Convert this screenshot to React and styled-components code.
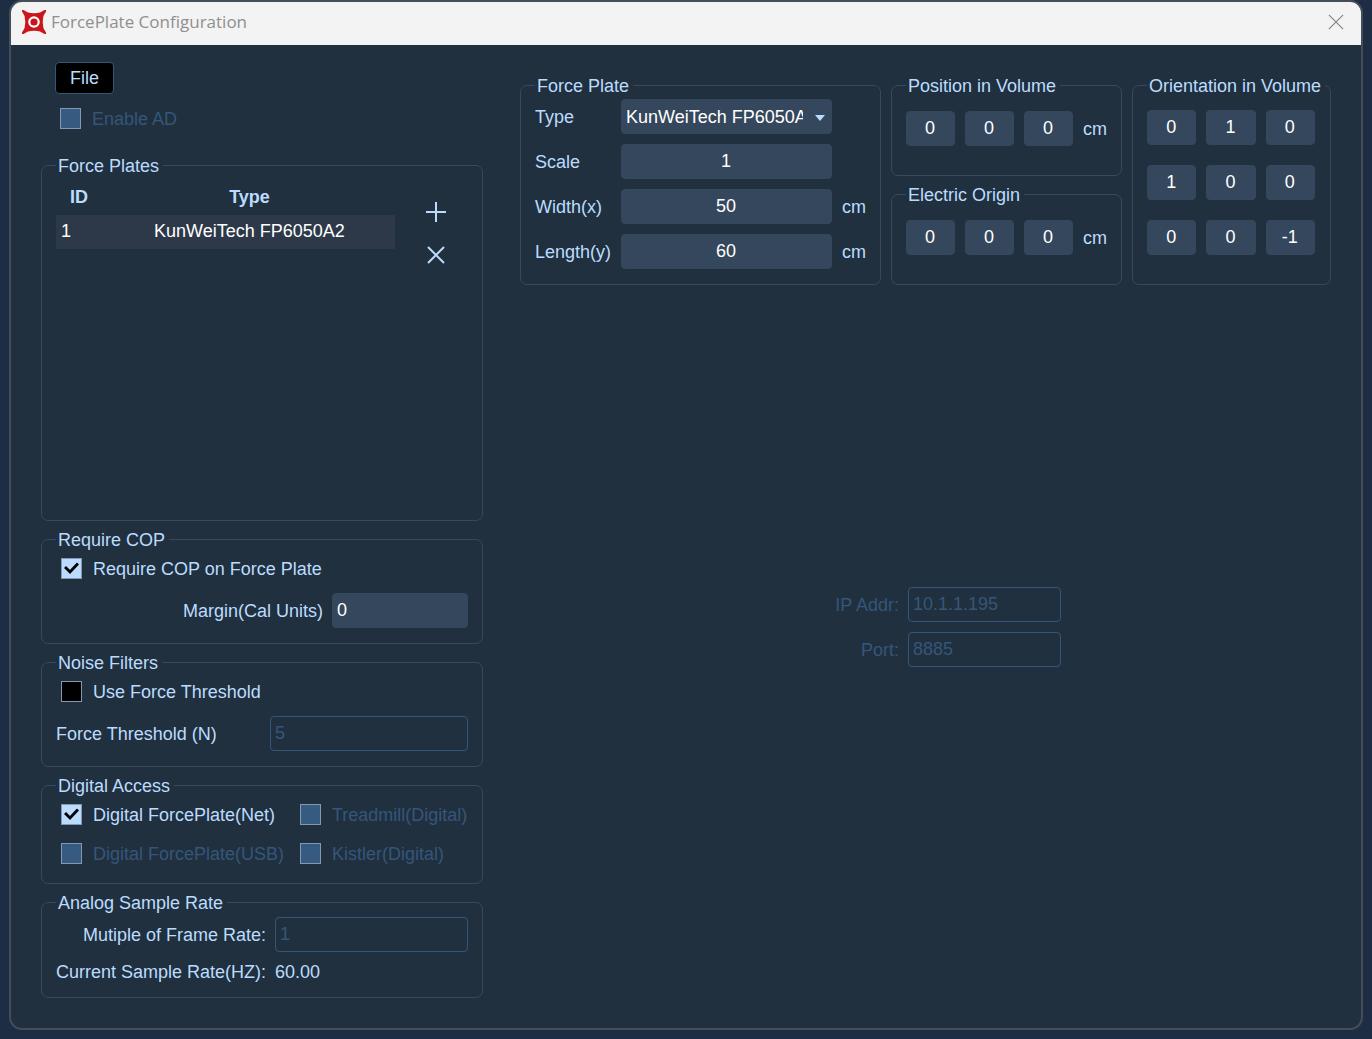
import { useState } from "react";
import styled, { createGlobalStyle } from "styled-components";

const GlobalStyle = createGlobalStyle`
  :root {
    --bg-window: #21303e;
    --bg-desktop: #1d2e44;
    --bg-input: #35475c;
    --bg-row: #2d3948;
    --line: #37495d;
    --text: #bbdcff;
    --muted: #34567b;
  }

  * {
    box-sizing: border-box;
  }

  body {
    margin: 0;
    background: var(--bg-desktop);
    color: var(--text);
    font: 18px/20px "Liberation Sans", Arial, sans-serif;
  }

  button,
  input,
  select {
    font: inherit;
  }
`;

const Page = styled.div`
  display: flex;
  min-height: 100vh;
  padding: 0 9px 9px;
`;

const Window = styled.main`
  flex: 1;
  display: flex;
  flex-direction: column;
  min-width: 0;
  border: 2px solid #444d58;
  border-radius: 13px;
  background: var(--bg-window);
  overflow: hidden;
`;

const TitleBar = styled.header`
  display: flex;
  align-items: center;
  height: 43px;
  padding: 0 13px 3px 11px;
  background: #f3f3f3;
`;

const Title = styled.h1`
  flex: 1;
  margin: 0 0 0 5px;
  color: #8f8f8f;
  font: 400 17px/24px "Open Sans", "Noto Sans", sans-serif;
`;

const IconButton = styled.button`
  display: grid;
  place-items: center;
  width: 24px;
  height: 24px;
  padding: 0;
  border: 0;
  background: none;
  color: ${({ $color }) => $color || "var(--text)"};
  cursor: pointer;
`;

const Content = styled.div`
  flex: 1;
  display: grid;
  grid-template-columns: 442px minmax(0, 1fr);
  column-gap: 37px;
  padding: 17px 30px 30px;
`;

const Sidebar = styled.div`
  display: flex;
  flex-direction: column;
  gap: 7px;
`;

const Toolbar = styled.div`
  display: flex;
  flex-direction: column;
  align-items: flex-start;
  gap: 14px;
  padding: 0 14px 18px;
`;

const FileButton = styled.button`
  width: 59px;
  height: 32px;
  padding: 0;
  border: 1px solid var(--muted);
  border-radius: 4px;
  background: #000;
  color: var(--text);
  cursor: pointer;
`;

const Group = styled.fieldset`
  flex: ${({ $grow }) => ($grow ? 1 : "none")};
  min-width: 0;
  margin: 0;
  padding: 0 0 0 14px;
  border: 1px solid var(--line);
  border-radius: 7px;
`;

const Legend = styled.legend`
  padding: 2px 4px 1px 2px;
  white-space: nowrap;
`;

const GroupBody = styled.div`
  display: flex;
  flex-direction: column;
  gap: 14px;
  padding: 7px 14px 15px 0;
`;

const PlatesBody = styled.div`
  display: flex;
  align-items: flex-start;
  gap: 29px;
`;

const PlatesTable = styled.table`
  width: 339px;
  border-collapse: collapse;
  table-layout: fixed;

  th {
    height: 38px;
    padding: 1px 0 0;
  }

  th:first-child {
    width: 46px;
  }

  td {
    height: 34px;
    padding: 0 0 2px;
    background: var(--bg-row);
    color: #fff;
    text-align: center;
  }

  th:last-child,
  td:last-child {
    padding-left: 2px;
  }

  td:first-child {
    padding-left: 5px;
    text-align: left;
  }
`;

const PlatesActions = styled.div`
  display: flex;
  flex-direction: column;
  gap: 19px;
  padding-top: 23px;
`;

const CheckLabel = styled.label`
  display: flex;
  align-items: center;
  gap: 11px;
  padding-left: 5px;
  color: ${({ $disabled }) => ($disabled ? "var(--muted)" : "var(--text)")};
  white-space: nowrap;
`;

const CheckSlot = styled.span`
  display: grid;
  width: 21px;
  height: 21px;

  > * {
    grid-area: 1 / 1;
    place-self: center;
  }

  svg {
    pointer-events: none;
  }
`;

const CheckInput = styled.input`
  appearance: none;
  width: 21px;
  height: 21px;
  margin: 0;
  border: 1px solid #8399b3;
  background: #000;

  &:checked {
    border-color: #8399b3;
    background: var(--text);
  }

  &:disabled {
    background: #375a80;
  }
`;

const CheckGrid = styled.div`
  display: grid;
  grid-template-columns: 239px 1fr;
  row-gap: 18px;
  padding: 7px 0 19px;
`;

const FieldRow = styled.div`
  display: flex;
  align-items: center;
  justify-content: ${({ $spread }) => ($spread ? "space-between" : "flex-end")};
  gap: 9px;
`;

const TextInput = styled.input`
  width: ${({ $width }) => $width || "100%"};
  min-width: 0;
  height: 35px;
  padding: ${({ $center }) => ($center ? "0 5px 0 4px" : "0 4px 1px")};
  border: 1px solid var(--bg-input);
  border-radius: 4px;
  outline: 0;
  background: var(--bg-input);
  color: #fff;
  text-align: ${({ $center }) => ($center ? "center" : "left")};

  &:disabled {
    border-color: var(--muted);
    background: transparent;
    color: var(--muted);
  }
`;

const RateGrid = styled.div`
  display: grid;
  grid-template-columns: 210px 1fr;
  align-items: center;
  gap: 10px 9px;
  padding: 3px 14px 15px 0;

  label,
  span {
    text-align: right;
    white-space: nowrap;
  }

  output {
    text-align: left;
  }
`;

const Main = styled.div`
  min-width: 0;
  padding-top: 12px;
`;

const Panels = styled.div`
  display: grid;
  grid-template-columns: 361fr 231fr 199fr;
  gap: 10px;
`;

const PanelStack = styled.div`
  display: flex;
  flex-direction: column;
  gap: 7px;
`;

const PlateGrid = styled.div`
  display: grid;
  grid-template-columns: 76px minmax(0, 1fr) 24px;
  align-items: center;
  gap: 10px;
  padding: 2px 14px 15px 0;

  label {
    grid-column: 1;
  }
`;

const SelectBox = styled.div`
  position: relative;

  svg {
    position: absolute;
    top: 16px;
    right: 7px;
    pointer-events: none;
  }
`;

const Select = styled.select`
  appearance: none;
  display: block;
  width: 100%;
  height: 35px;
  padding: 0 28px 0 4px;
  border: 1px solid var(--bg-input);
  border-radius: 4px;
  background: var(--bg-input);
  color: #fff;
`;

const VectorRow = styled.div`
  display: grid;
  grid-template-columns: repeat(3, minmax(0, 1fr)) 24px;
  align-items: center;
  gap: 10px;
  padding: 14px 14px 29px 0;
`;

const MatrixGrid = styled.div`
  display: grid;
  grid-template-columns: repeat(3, minmax(0, 1fr));
  gap: 20px 10px;
  padding: 13px 15px 29px 0;
`;

const Network = styled.div`
  display: grid;
  grid-template-columns: auto 153px;
  justify-content: end;
  align-items: center;
  gap: 10px 9px;
  margin: 302px 270px 0 0;
  color: var(--muted);
  text-align: right;
`;

function Logo() {
  return (
    <svg width="24" height="24" viewBox="0 0 24 24" aria-hidden="true">
      <path
        d="M0 0h1.500L6 2.600Q12 4 18 2.600L22.500 0H24v1.500L21.400 6Q20 12 21.400 18L24 22.500V24h-1.500L18 21.400Q12 20 6 21.400L1.500 24H0v-1.500L2.600 18Q4 12 2.600 6L0 1.500z"
        fill="#cb151d"
      />
      <circle cx="12" cy="12" r="4.700" fill="none" stroke="#fff" strokeWidth="2.200" />
    </svg>
  );
}

function Cross({ size, strokeWidth }) {
  return (
    <svg width={size} height={size} viewBox="0 0 18 18" aria-hidden="true">
      <path d="M1 1l16 16M17 1L1 17" stroke="currentColor" strokeWidth={strokeWidth} />
    </svg>
  );
}

function Plus() {
  return (
    <svg width="20" height="20" viewBox="0 0 20 20" aria-hidden="true">
      <path d="M10 0v20M0 10h20" stroke="currentColor" strokeWidth="2" />
    </svg>
  );
}

function Check({ label, defaultChecked = false, disabled = false }) {
  const [checked, setChecked] = useState(defaultChecked);

  return (
    <CheckLabel $disabled={disabled}>
      <CheckSlot>
        <CheckInput
          type="checkbox"
          checked={checked}
          disabled={disabled}
          onChange={(event) => setChecked(event.target.checked)}
        />
        {checked && (
          <svg width="15" height="13" viewBox="0 0 15 13" aria-hidden="true">
            <path d="M1 5l5 5 8-8.500" fill="none" stroke="#000" strokeWidth="2.900" />
          </svg>
        )}
      </CheckSlot>
      {label}
    </CheckLabel>
  );
}

function VectorGroup({ title, values }) {
  return (
    <Group>
      <Legend>{title}</Legend>
      <VectorRow>
        {values.map((value, index) => (
          <TextInput
            key={index}
            $center
            aria-label={`${title} ${"XYZ"[index]}`}
            defaultValue={value}
          />
        ))}
        <span>cm</span>
      </VectorRow>
    </Group>
  );
}

const orientation = [0, 1, 0, 1, 0, 0, 0, 0, -1];

function App() {
  return (
    <Page>
      <GlobalStyle />
      <Window>
        <TitleBar>
          <Logo />
          <Title>ForcePlate Configuration</Title>
          <IconButton type="button" aria-label="Close" $color="#8a8a8a">
            <Cross size={16} strokeWidth={1.4} />
          </IconButton>
        </TitleBar>

        <Content>
          <Sidebar>
            <Toolbar>
              <FileButton type="button">File</FileButton>
              <Check label="Enable AD" disabled />
            </Toolbar>

            <Group $grow>
              <Legend>Force Plates</Legend>
              <PlatesBody>
                <PlatesTable>
                  <thead>
                    <tr>
                      <th scope="col">ID</th>
                      <th scope="col">Type</th>
                    </tr>
                  </thead>
                  <tbody>
                    <tr>
                      <td>1</td>
                      <td>KunWeiTech FP6050A2</td>
                    </tr>
                  </tbody>
                </PlatesTable>
                <PlatesActions>
                  <IconButton type="button" aria-label="Add force plate">
                    <Plus />
                  </IconButton>
                  <IconButton type="button" aria-label="Remove force plate">
                    <Cross size={18} strokeWidth={2} />
                  </IconButton>
                </PlatesActions>
              </PlatesBody>
            </Group>

            <Group>
              <Legend>Require COP</Legend>
              <GroupBody>
                <Check label="Require COP on Force Plate" defaultChecked />
                <FieldRow>
                  <label htmlFor="margin">Margin(Cal Units)</label>
                  <TextInput id="margin" $width="136px" defaultValue="0" />
                </FieldRow>
              </GroupBody>
            </Group>

            <Group>
              <Legend>Noise Filters</Legend>
              <GroupBody>
                <Check label="Use Force Threshold" />
                <FieldRow $spread>
                  <label htmlFor="threshold">Force Threshold (N)</label>
                  <TextInput id="threshold" $width="198px" defaultValue="5" disabled />
                </FieldRow>
              </GroupBody>
            </Group>

            <Group>
              <Legend>Digital Access</Legend>
              <CheckGrid>
                <Check label="Digital ForcePlate(Net)" defaultChecked />
                <Check label="Treadmill(Digital)" disabled />
                <Check label="Digital ForcePlate(USB)" disabled />
                <Check label="Kistler(Digital)" disabled />
              </CheckGrid>
            </Group>

            <Group>
              <Legend>Analog Sample Rate</Legend>
              <RateGrid>
                <label htmlFor="multiple">Mutiple of Frame Rate:</label>
                <TextInput id="multiple" defaultValue="1" disabled />
                <span>Current Sample Rate(HZ):</span>
                <output>60.00</output>
              </RateGrid>
            </Group>
          </Sidebar>

          <Main>
            <Panels>
              <Group>
                <Legend>Force Plate</Legend>
                <PlateGrid>
                  <label htmlFor="type">Type</label>
                  <SelectBox>
                    <Select id="type" defaultValue="fp6050a2">
                      <option value="fp6050a2">KunWeiTech FP6050A2</option>
                    </Select>
                    <svg width="10" height="6" viewBox="0 0 10 6" aria-hidden="true">
                      <path d="M0 0h10L5 6z" fill="#bbdcff" />
                    </svg>
                  </SelectBox>
                  <label htmlFor="scale">Scale</label>
                  <TextInput id="scale" $center defaultValue="1" />
                  <label htmlFor="width">Width(x)</label>
                  <TextInput id="width" $center defaultValue="50" />
                  <span>cm</span>
                  <label htmlFor="length">Length(y)</label>
                  <TextInput id="length" $center defaultValue="60" />
                  <span>cm</span>
                </PlateGrid>
              </Group>

              <PanelStack>
                <VectorGroup title="Position in Volume" values={[0, 0, 0]} />
                <VectorGroup title="Electric Origin" values={[0, 0, 0]} />
              </PanelStack>

              <Group>
                <Legend>Orientation in Volume</Legend>
                <MatrixGrid>
                  {orientation.map((value, index) => (
                    <TextInput
                      key={index}
                      $center
                      aria-label={`Orientation row ${Math.floor(index / 3) + 1} column ${(index % 3) + 1}`}
                      defaultValue={value}
                    />
                  ))}
                </MatrixGrid>
              </Group>
            </Panels>

            <Network>
              <label htmlFor="ip">IP Addr:</label>
              <TextInput id="ip" defaultValue="10.1.1.195" disabled />
              <label htmlFor="port">Port:</label>
              <TextInput id="port" defaultValue="8885" disabled />
            </Network>
          </Main>
        </Content>
      </Window>
    </Page>
  );
}

export default App;
